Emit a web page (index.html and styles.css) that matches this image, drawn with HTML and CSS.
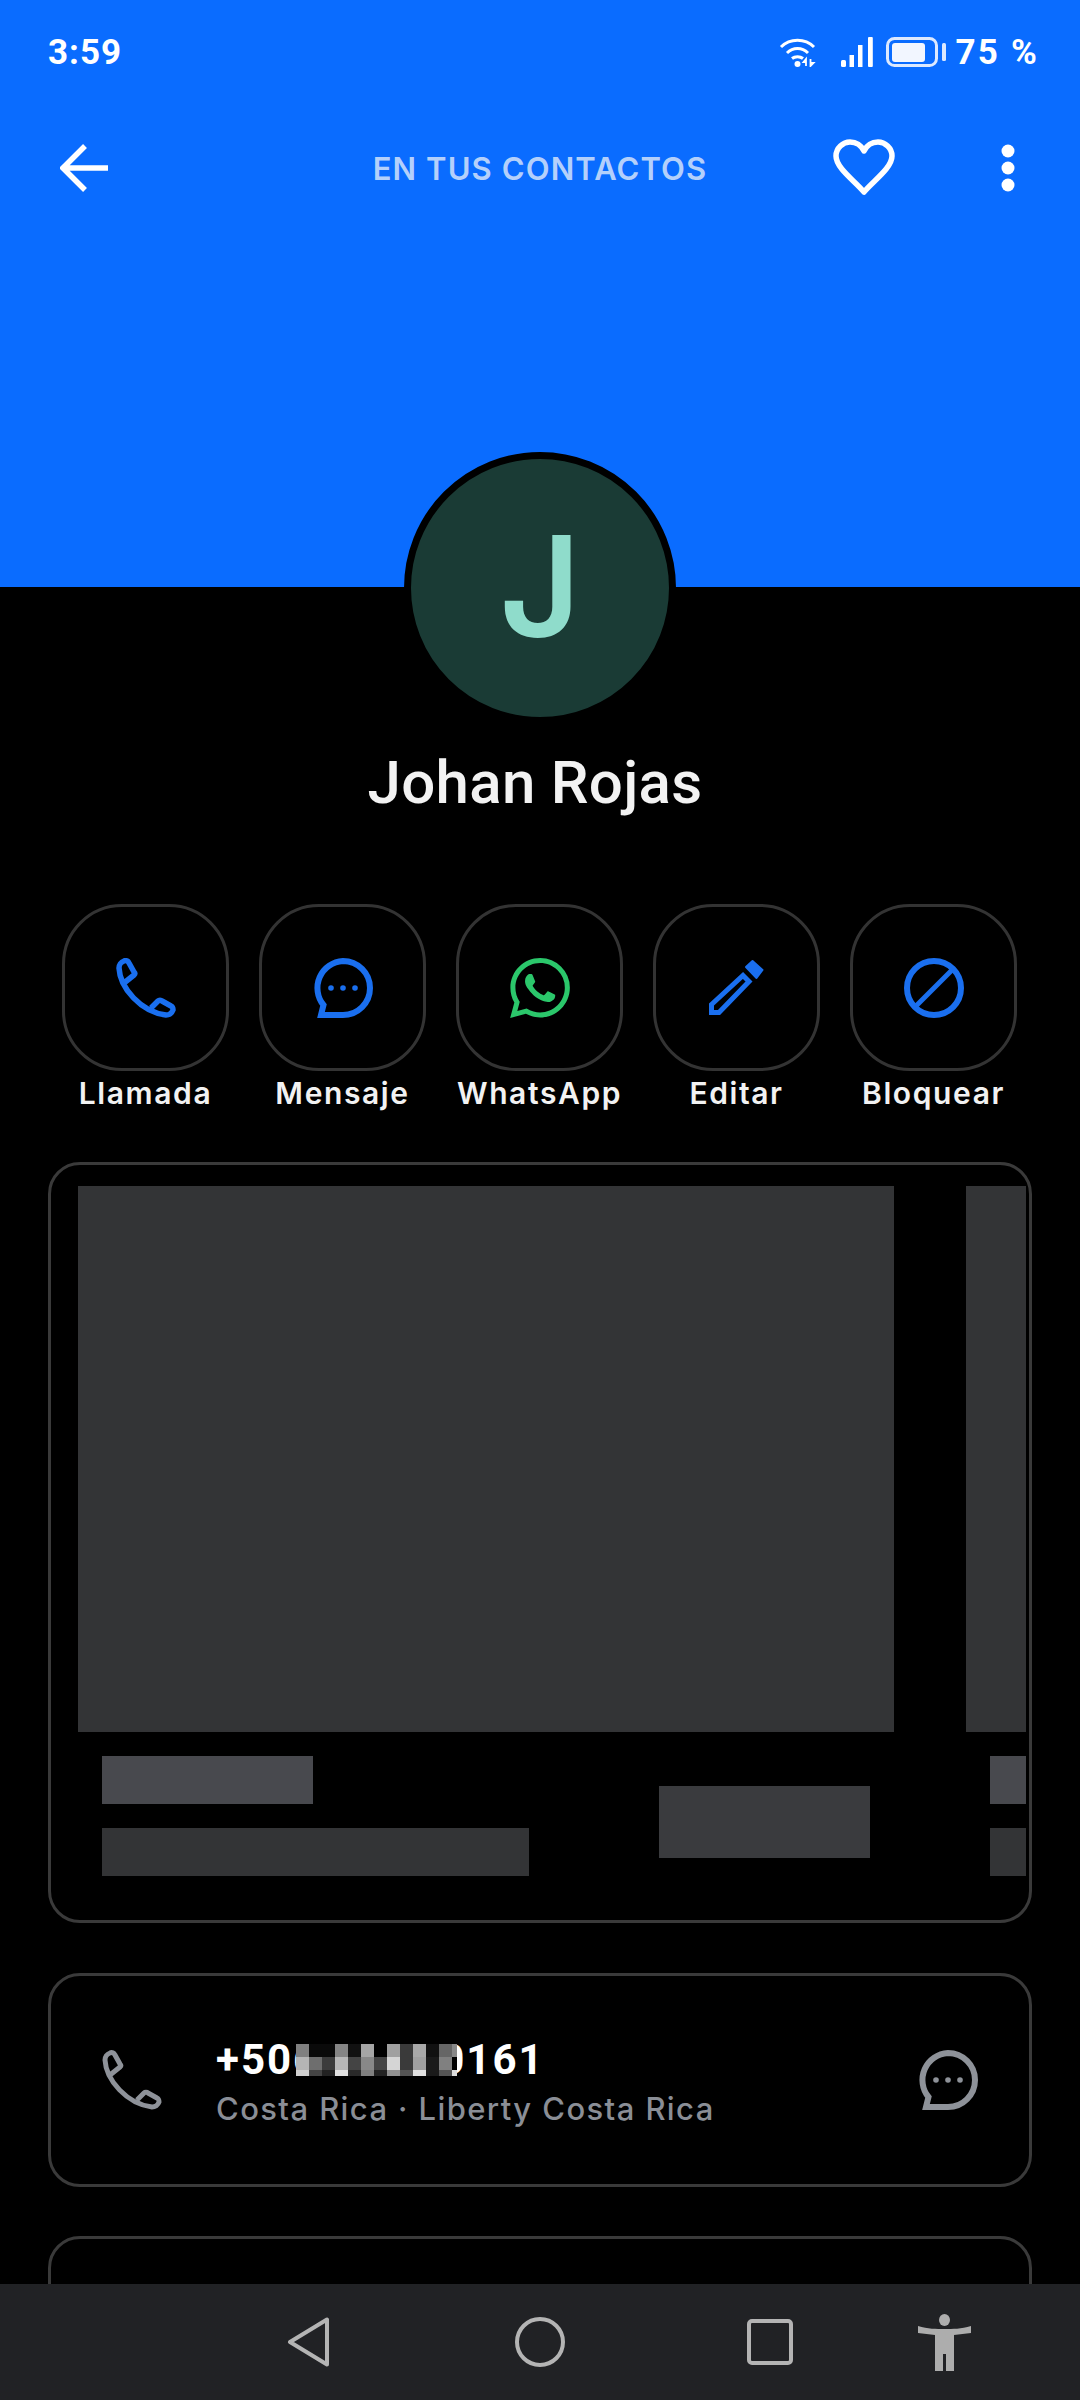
FILE: index.html
```html
<!DOCTYPE html>
<html lang="es">
<head>
  <meta charset="UTF-8">
  <title>Johan Rojas</title>
  <link rel="stylesheet" href="styles.css">
</head>
<body>
  <div class="screen">
    <main class="content">
      <header class="hero">
        <div class="status">
          <span class="time">3:59</span>
          <div class="status-icons">
            <svg class="wifi" width="38" height="30" viewBox="0 0 38 30">
              <path d="M2 10 C11 1 26 1 35 10" fill="none" stroke="#fff" stroke-width="3"/>
              <path d="M8 16 C14 10 23 10 29 16" fill="none" stroke="#fff" stroke-width="3"/>
              <path d="M13 21.5 C16 19 21 19 24 21.5" fill="none" stroke="#fff" stroke-width="3"/>
              <circle cx="18.5" cy="27" r="3" fill="#fff"/>
              <path d="M27 29 V22 L24.5 25 H27 M31.5 22 V29 L34.5 26 H31.5" fill="none" stroke="#fff" stroke-width="1.8"/>
            </svg>
            <svg class="signal" width="32" height="30" viewBox="0 0 32 30">
              <rect x="0" y="23" width="5" height="7" rx="1.5" fill="#fff"/>
              <rect x="8.5" y="18" width="4.5" height="12" fill="#fff"/>
              <rect x="17" y="8" width="4.5" height="22" fill="#fff"/>
              <rect x="27" y="0" width="4.8" height="30" rx="1" fill="#fff"/>
            </svg>
            <svg class="battery" width="60" height="30" viewBox="0 0 60 30">
              <rect x="1.5" y="1.5" width="49" height="27" rx="7" fill="none" stroke="#dce9ff" stroke-width="3"/>
              <rect x="6" y="6" width="33" height="19" rx="3" fill="#f2f6ff"/>
              <rect x="56" y="6" width="4" height="18" rx="1.5" fill="#dce9ff"/>
            </svg>
            <span class="percent">75 %</span>
          </div>
        </div>
        <div class="toolbar">
          <svg class="back" width="50" height="48" viewBox="0 0 50 48">
            <path d="M25 2 L3 24 L25 46 M3 24 H48" fill="none" stroke="#fff" stroke-width="5.5"/>
          </svg>
          <span class="toolbar-title">EN TUS CONTACTOS</span>
          <div class="toolbar-actions">
            <svg width="62" height="58" viewBox="0 0 62 58">
              <path d="M31 53 C22 42 3 29 3 17 C3 9 10 3 17 3 C23 3 28 6 31 12 C34 6 39 3 45 3 C52 3 59 9 59 17 C59 29 40 42 31 53Z" fill="none" stroke="#fff" stroke-width="5.5" stroke-linejoin="round"/>
            </svg>
            <svg width="20" height="48" viewBox="0 0 20 48">
              <circle cx="8" cy="7" r="6.5" fill="#fff"/>
              <circle cx="8" cy="24" r="6.5" fill="#fff"/>
              <circle cx="8" cy="41" r="6.5" fill="#fff"/>
            </svg>
          </div>
        </div>
      </header>

      <div class="avatar">J</div>
      <h1 class="name">Johan Rojas</h1>

      <div class="actions">
        <div class="action">
          <div class="action-btn">
            <svg class="icon-blue" width="60" height="60" viewBox="0 0 60 60"><path d="M8 25 L18 17 C19 16 19 15 18 14 L13 5 C12 3 10 2 8 3 C5 4 3 7 3 10 C4 30 25 54 50 57 C53 57 56 55 57 52 C57 50 57 49 55 48 L46 43 C45 42 43 42 42 43 L35 50" fill="none" stroke="currentColor" stroke-width="5.5" stroke-linejoin="round"/></svg>
          </div>
          <span class="action-label">Llamada</span>
        </div>
        <div class="action">
          <div class="action-btn">
            <svg class="icon-blue" width="60" height="60" viewBox="0 0 60 60">
              <path d="M30 3 A27 27 0 0 1 30 57 H8 L10.5 47 A27 27 0 0 1 30 3Z" fill="none" stroke="currentColor" stroke-width="6"/>
              <circle cx="18" cy="30" r="2.8" fill="currentColor"/>
              <circle cx="30" cy="30" r="2.8" fill="currentColor"/>
              <circle cx="42" cy="30" r="2.8" fill="currentColor"/>
            </svg>
          </div>
          <span class="action-label">Mensaje</span>
        </div>
        <div class="action">
          <div class="action-btn">
            <svg class="icon-green" width="60" height="60" viewBox="0 0 24 24"><path fill="currentColor" d="M17.472 14.382c-.297-.149-1.758-.867-2.03-.967-.273-.099-.471-.148-.67.15-.197.297-.767.966-.94 1.164-.173.199-.347.223-.644.075-.297-.15-1.255-.463-2.39-1.475-.883-.788-1.48-1.761-1.653-2.059-.173-.297-.018-.458.13-.606.134-.133.298-.347.446-.52.149-.174.198-.298.298-.497.099-.198.05-.371-.025-.52-.075-.149-.669-1.612-.916-2.207-.242-.579-.487-.5-.669-.51-.173-.008-.371-.01-.57-.01-.198 0-.52.074-.792.372-.272.297-1.04 1.016-1.04 2.479 0 1.462 1.065 2.875 1.213 3.074.149.198 2.096 3.2 5.077 4.487.709.306 1.262.489 1.694.625.712.227 1.36.195 1.871.118.571-.085 1.758-.719 2.006-1.413.248-.694.248-1.289.173-1.413-.074-.124-.272-.198-.57-.347m-5.421 7.403h-.004a9.87 9.87 0 01-5.031-1.378l-.361-.214-3.741.982.998-3.648-.235-.374a9.86 9.86 0 01-1.51-5.26c.001-5.45 4.436-9.884 9.888-9.884 2.64 0 5.122 1.03 6.988 2.898a9.825 9.825 0 012.893 6.994c-.003 5.45-4.437 9.884-9.885 9.884m8.413-18.297A11.815 11.815 0 0012.05 0C5.495 0 .16 5.335.157 11.892c0 2.096.547 4.142 1.588 5.945L.057 24l6.305-1.654a11.882 11.882 0 005.683 1.448h.005c6.554 0 11.89-5.335 11.893-11.893a11.821 11.821 0 00-3.48-8.413z"/></svg>
          </div>
          <span class="action-label">WhatsApp</span>
        </div>
        <div class="action">
          <div class="action-btn">
            <svg class="icon-blue" width="60" height="60" viewBox="0 0 60 60">
              <path d="M4.5 46.5 L36 17.5 L42 23.5 L12 54.5 H4.5Z" fill="none" stroke="currentColor" stroke-width="5"/>
              <path d="M39 9 L45.5 3 L55.5 12 L49.5 20Z" fill="currentColor" stroke="currentColor" stroke-width="2" stroke-linejoin="round"/>
            </svg>
          </div>
          <span class="action-label">Editar</span>
        </div>
        <div class="action">
          <div class="action-btn">
            <svg class="icon-blue" width="60" height="60" viewBox="0 0 60 60">
              <circle cx="30" cy="30" r="27" fill="none" stroke="currentColor" stroke-width="6"/>
              <path d="M11 49 L49 11" stroke="currentColor" stroke-width="5"/>
            </svg>
          </div>
          <span class="action-label">Bloquear</span>
        </div>
      </div>

      <section class="card carousel-card">
        <div class="carousel">
          <div class="slide">
            <div class="slide-img"></div>
            <div class="slide-info">
              <div class="slide-text">
                <div class="bar bar-title"></div>
                <div class="bar bar-sub"></div>
              </div>
              <div class="slide-btn"></div>
            </div>
          </div>
          <div class="slide">
            <div class="slide-img"></div>
            <div class="slide-info">
              <div class="slide-text">
                <div class="bar bar-title"></div>
                <div class="bar bar-sub"></div>
              </div>
              <div class="slide-btn"></div>
            </div>
          </div>
        </div>
      </section>

      <section class="card phone-card">
        <svg class="icon-grey" width="60" height="60" viewBox="0 0 60 60"><path d="M8 25 L18 17 C19 16 19 15 18 14 L13 5 C12 3 10 2 8 3 C5 4 3 7 3 10 C4 30 25 54 50 57 C53 57 56 55 57 52 C57 50 57 49 55 48 L46 43 C45 42 43 42 42 43 L35 50" fill="none" stroke="currentColor" stroke-width="5" stroke-linejoin="round"/></svg>
        <div class="phone-text">
          <div class="phone-number">
            <span>+506</span>
            <svg class="mosaic" width="161" height="32" viewBox="0 0 161 32" shape-rendering="crispEdges">
              <g>
                <rect x="0" y="0" width="13" height="13" fill="#808080"/><rect x="13" y="0" width="13" height="13" fill="#0a0a0a"/><rect x="26" y="0" width="13" height="13" fill="#0a0a0a"/><rect x="39" y="0" width="13" height="13" fill="#858585"/><rect x="52" y="0" width="13" height="13" fill="#111"/><rect x="65" y="0" width="13" height="13" fill="#a5a5a5"/><rect x="78" y="0" width="13" height="13" fill="#000"/><rect x="91" y="0" width="13" height="13" fill="#a0a0a0"/><rect x="104" y="0" width="13" height="13" fill="#3a3a3a"/><rect x="117" y="0" width="13" height="13" fill="#a8a8a8"/><rect x="130" y="0" width="13" height="13" fill="#111"/><rect x="143" y="0" width="13" height="13" fill="#666"/><rect x="156" y="0" width="5" height="13" fill="#888"/>
                <rect x="0" y="13" width="13" height="13" fill="#b5b5b5"/><rect x="13" y="13" width="13" height="13" fill="#6e6e6e"/><rect x="26" y="13" width="13" height="13" fill="#3c3c3c"/><rect x="39" y="13" width="13" height="13" fill="#b8b8b8"/><rect x="52" y="13" width="13" height="13" fill="#444"/><rect x="65" y="13" width="13" height="13" fill="#888"/><rect x="78" y="13" width="13" height="13" fill="#444"/><rect x="91" y="13" width="13" height="13" fill="#d5d5d5"/><rect x="104" y="13" width="13" height="13" fill="#3a3a3a"/><rect x="117" y="13" width="13" height="13" fill="#a0a0a0"/><rect x="130" y="13" width="13" height="13" fill="#1a1a1a"/><rect x="143" y="13" width="13" height="13" fill="#808080"/><rect x="156" y="13" width="5" height="13" fill="#000"/>
                <rect x="0" y="26" width="13" height="6" fill="#d0d0d0"/><rect x="13" y="26" width="13" height="6" fill="#444"/><rect x="26" y="26" width="13" height="6" fill="#222"/><rect x="39" y="26" width="13" height="6" fill="#e0e0e0"/><rect x="52" y="26" width="13" height="6" fill="#2a2a2a"/><rect x="65" y="26" width="13" height="6" fill="#808080"/><rect x="78" y="26" width="13" height="6" fill="#222"/><rect x="91" y="26" width="13" height="6" fill="#909090"/><rect x="104" y="26" width="13" height="6" fill="#555"/><rect x="117" y="26" width="13" height="6" fill="#e0e0e0"/><rect x="130" y="26" width="13" height="6" fill="#1a1a1a"/><rect x="143" y="26" width="13" height="6" fill="#555"/><rect x="156" y="26" width="5" height="6" fill="#ddd"/>
              </g>
            </svg>
            <span class="phone-end">0161</span>
          </div>
          <div class="phone-sub">Costa Rica · Liberty Costa Rica</div>
        </div>
        <svg class="icon-grey phone-msg" width="60" height="60" viewBox="0 0 60 60">
          <path d="M30 3 A27 27 0 0 1 30 57 H8 L10.5 47 A27 27 0 0 1 30 3Z" fill="none" stroke="currentColor" stroke-width="6"/>
          <circle cx="18" cy="30" r="2.8" fill="currentColor"/>
          <circle cx="30" cy="30" r="2.8" fill="currentColor"/>
          <circle cx="42" cy="30" r="2.8" fill="currentColor"/>
        </svg>
      </section>

      <section class="card next-card"></section>
    </main>

    <nav class="navbar">
      <svg class="nav-back" width="44" height="50" viewBox="0 0 44 50"><path d="M40 2.5 V47.5 L3 25Z" fill="none" stroke="#b4b4b4" stroke-width="4" stroke-linejoin="round"/></svg>
      <svg class="nav-home" width="50" height="50" viewBox="0 0 50 50"><circle cx="25" cy="25" r="23" fill="none" stroke="#b4b4b4" stroke-width="4"/></svg>
      <svg class="nav-recent" width="46" height="46" viewBox="0 0 46 46"><rect x="2" y="2" width="42" height="42" rx="3" fill="none" stroke="#b4b4b4" stroke-width="4"/></svg>
      <svg class="nav-access" width="53" height="57" viewBox="0 0 53 57">
        <ellipse cx="26.5" cy="6" rx="5.5" ry="6" fill="#adadad"/>
        <path d="M0 12 C10 15 18 15 26.5 15 C35 15 43 15 53 12 V19 L36 21 V57 H28 V40 H25 V57 H17 V21 L0 19Z" fill="#adadad"/>
      </svg>
    </nav>
  </div>
</body>
</html>
```

FILE: styles.css
```css
* {
  box-sizing: border-box;
}
body {
  margin: 0;
  background: #000;
  font-family: "Inter", "Noto Sans", sans-serif;
  color: #f2f2f2;
}
.screen {
  width: 1080px;
  height: 2400px;
  display: flex;
  flex-direction: column;
  overflow: hidden;
}
.content {
  flex: 1;
  min-height: 0;
  overflow: hidden;
}

/* blue header */
.hero {
  height: 587px;
  background: #0a6cff;
}
.status {
  height: 104px;
  padding: 0 41px 0 48px;
  display: flex;
  align-items: center;
  justify-content: space-between;
  color: #fff;
  font-family: "Roboto", sans-serif;
  font-weight: 700;
  font-size: 35px;
}
.time {
  letter-spacing: 1px;
}
.status-icons {
  display: flex;
  align-items: center;
}
.signal {
  margin-left: 24px;
}
.battery {
  margin-left: 13px;
}
.percent {
  margin-left: 9px;
  letter-spacing: 2.2px;
}
.toolbar {
  height: 128px;
  padding: 0 60px;
  display: grid;
  grid-template-columns: 1fr auto 1fr;
  align-items: center;
}
.toolbar-title {
  font-size: 31px;
  font-weight: 600;
  letter-spacing: 1.1px;
  color: #b4d0fb;
}
.toolbar-actions {
  display: flex;
  align-items: center;
  justify-content: flex-end;
  gap: 105px;
}

/* avatar and name */
.avatar {
  width: 272px;
  height: 272px;
  margin: -135px auto 0;
  padding-bottom: 4px;
  border: 7px solid #000;
  border-radius: 50%;
  background: #1a3b35;
  color: #8fdccb;
  font-weight: 600;
  font-size: 140px;
  display: flex;
  align-items: center;
  justify-content: center;
}
.name {
  margin: 24px 0 0;
  padding-right: 10px;
  text-align: center;
  font-family: "Roboto", sans-serif;
  font-weight: 500;
  font-size: 60px;
  letter-spacing: 0.3px;
  line-height: 70px;
}

/* quick actions */
.actions {
  display: flex;
  gap: 30px;
  margin-top: 86px;
  padding-left: 62px;
}
.action {
  width: 167px;
  display: flex;
  flex-direction: column;
  align-items: center;
}
.action-btn {
  width: 167px;
  height: 167px;
  border: 3px solid #333;
  border-radius: 60px;
  display: flex;
  align-items: center;
  justify-content: center;
}
.action-label {
  margin-top: 2px;
  margin-bottom: 7px;
  font-size: 30px;
  font-weight: 600;
  letter-spacing: 1.6px;
  line-height: 40px;
  white-space: nowrap;
}
.icon-blue {
  color: #1a6fef;
}
.icon-green {
  color: #2bc76b;
}
.icon-grey {
  color: #8e9299;
}

/* cards */
.card {
  margin: 0 48px;
  border: 3px solid #3a3a3a;
  border-radius: 32px;
}
.carousel-card {
  height: 761px;
  margin-top: 42px;
  padding: 21px 3px 0 27px;
}
.carousel {
  display: flex;
  gap: 72px;
  overflow: hidden;
}
.slide {
  flex: none;
  width: 816px;
}
.slide-img {
  height: 546px;
  background: #333436;
}
.slide-info {
  display: flex;
  justify-content: space-between;
  padding: 24px 24px 0;
}
.bar {
  height: 48px;
}
.bar-title {
  width: 211px;
  background: #48494e;
}
.bar-sub {
  width: 427px;
  margin-top: 24px;
  background: #333436;
}
.slide-btn {
  width: 211px;
  height: 72px;
  margin-top: 30px;
  background: #3a3b3e;
}

.phone-card {
  height: 214px;
  margin-top: 50px;
  padding: 0 51px;
  display: flex;
  align-items: center;
}
.phone-text {
  margin-left: 54px;
  padding-top: 8px;
}
.phone-number {
  display: flex;
  align-items: center;
  height: 40px;
  font-family: "Roboto", sans-serif;
  font-size: 42px;
  font-weight: 700;
  letter-spacing: 2px;
  color: #fff;
}
.mosaic {
  position: relative;
  z-index: 1;
  margin-left: -23px;
}
.phone-end {
  margin-left: -17px;
}
.phone-sub {
  margin-top: 9px;
  font-size: 31px;
  font-weight: 500;
  letter-spacing: 1.4px;
  line-height: 40px;
  color: #8a8e96;
}
.phone-msg {
  margin-left: auto;
}
.next-card {
  height: 200px;
  margin-top: 49px;
}

/* bottom nav */
.navbar {
  flex: none;
  height: 116px;
  padding: 33px 0 0 287px;
  background: #212225;
  display: flex;
  align-items: flex-start;
}
.nav-home {
  margin-left: 184px;
}
.nav-recent {
  margin: 2px 0 0 182px;
}
.nav-access {
  margin: -3px 0 0 125px;
}
```
